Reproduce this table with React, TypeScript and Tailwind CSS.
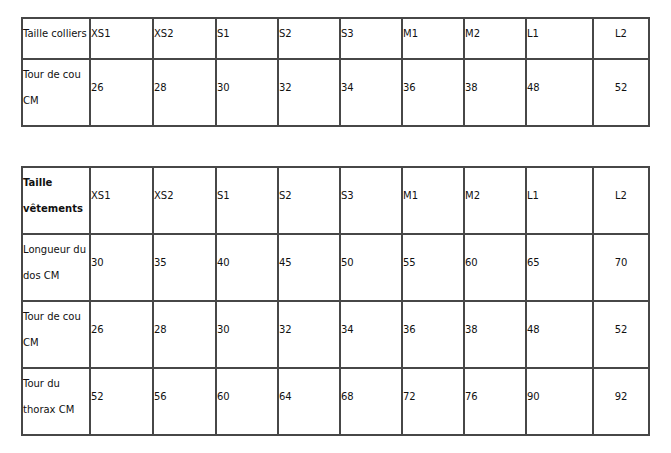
const sizes = ['XS1', 'XS2', 'S1', 'S2', 'S3', 'M1', 'M2', 'L1', 'L2'];
const widths = [68, 63, 63, 62, 62, 62, 62, 62, 67, 56];

type Row = { label: string; values: (string | number)[]; bold?: boolean };

const colliers: Row[] = [
  { label: 'Taille colliers', values: sizes },
  { label: 'Tour de cou CM', values: [26, 28, 30, 32, 34, 36, 38, 48, 52] },
];

const vetements: Row[] = [
  { label: 'Taille vêtements', values: sizes, bold: true },
  { label: 'Longueur du dos CM', values: [30, 35, 40, 45, 50, 55, 60, 65, 70] },
  { label: 'Tour de cou CM', values: [26, 28, 30, 32, 34, 36, 38, 48, 52] },
  { label: 'Tour du thorax CM', values: [52, 56, 60, 64, 68, 72, 76, 90, 92] },
];

const SizeTable = ({ rows }: { rows: Row[] }) => (
  <table className="table-fixed border-collapse border-2 border-[#474747] w-[627px]">
    <colgroup>
      {widths.map((w, i) => (
        <col key={i} style={{ width: w }} />
      ))}
    </colgroup>
    <tbody>
      {rows.map((row, r) => (
        <tr key={r}>
          <td className={`border-2 border-[#474747] align-middle pt-[2px] pb-[11px] pl-0 pr-0 leading-[26px] ${row.bold ? 'font-bold' : ''}`}>
            {row.label}
          </td>
          {row.values.map((v, i) => (
            <td
              key={i}
              className={`border-2 border-[#474747] align-middle pt-[2px] pb-[11px] px-0 leading-[26px] ${i === row.values.length - 1 ? 'text-center' : 'text-left'}`}
            >
              {v}
            </td>
          ))}
        </tr>
      ))}
    </tbody>
  </table>
);

const App = () => {
  return (
    <div className="w-[671px] h-[453px] bg-white text-[#111] text-[10px] font-['DejaVu_Sans',sans-serif] pl-[21px] pt-[17px]">
      <SizeTable rows={colliers} />
      <div className="h-[39px]" />
      <SizeTable rows={vetements} />
    </div>
  );
};

export default App;
